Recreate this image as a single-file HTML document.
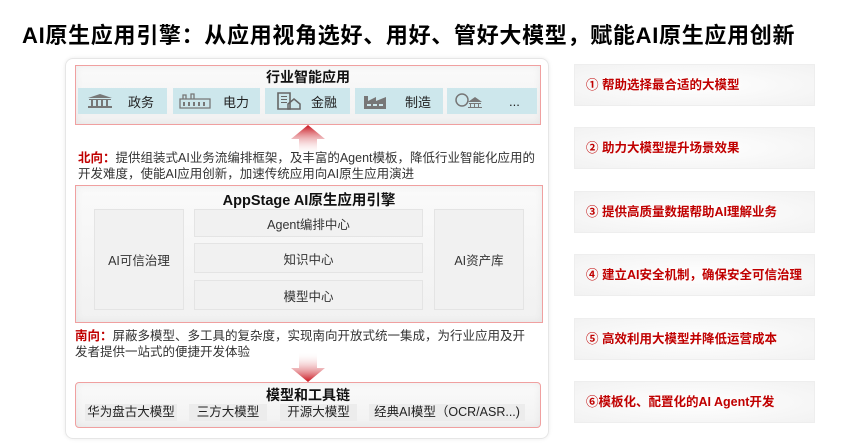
<!DOCTYPE html>
<html><head><meta charset="utf-8"><style>
*{margin:0;padding:0;box-sizing:border-box}
body{width:865px;height:444px;background:#fff;position:relative;overflow:hidden;font-family:"Liberation Sans","Noto Sans CJK SC",sans-serif;color:#222}
.a{position:absolute}
.title{left:22px;top:18px;font-size:22px;font-weight:bold;color:#000;white-space:nowrap;letter-spacing:0.7px}
.card{left:65px;top:58px;width:484px;height:381px;border:1px solid #e6e6e6;border-radius:8px;box-shadow:0 0 4px rgba(0,0,0,.08)}
.sec{border:1px solid #f0a0a0;background:linear-gradient(#fafafa,#f1f1f1);box-shadow:inset 0 0 8px rgba(0,0,0,.06)}
.h{font-weight:bold;font-size:14px;text-align:center;color:#111}
.tile{top:88px;height:26px;background:#cde7ec;font-size:13px;display:flex;align-items:center}
.tile span{position:absolute;left:50px}
.box{background:#f1f1f1;border:1px solid #e4e4e4;font-size:12.5px;display:flex;align-items:center;justify-content:center;color:#333}
.txt{font-size:12.5px;line-height:16px;color:#333}
.txt b{color:#c00000}
.chip{top:404px;height:17px;background:#ececec;font-size:12.5px;line-height:17px;text-align:center;color:#222}
.rb{left:574px;width:241px;height:42px;background:radial-gradient(ellipse at center,#fff 0%,#f2f2f2 100%);border:1px solid #eee;color:#c00000;font-weight:bold;font-size:12.5px;line-height:40px;padding-left:11px}
</style></head><body>
<div class="a title">AI原生应用引擎：从应用视角选好、用好、管好大模型，赋能AI原生应用创新</div>
<div class="a card"></div>

<div class="a sec" style="left:75px;top:65px;width:466px;height:60px"></div>
<div class="a h" style="left:75px;top:67px;width:466px">行业智能应用</div>
<div class="a tile" style="left:78px;width:89px"><svg class="a" style="left:8px;top:6px" width="28" height="14"><path d="M2 4L14 0L26 4Z M3 5h22v1H3z M5 6h2v6H5z M10 6h2v6h-2z M15 6h2v6h-2z M20 6h2v6h-2z M2 12h24v2H2z" fill="#777"/></svg><span>政务</span></div>
<div class="a tile" style="left:173px;width:87px"><svg class="a" style="left:6px;top:5px" width="32" height="16"><path d="M1 6h30v9H1z M4 2h3v4H4z M12 1h3v5h-3z" fill="none" stroke="#777" stroke-width="1.3"/><path d="M4 9h2v4H4zM9 9h2v4H9zM14 9h2v4h-2zM19 9h2v4h-2zM24 9h2v4h-2z" fill="#777"/></svg><span>电力</span></div>
<div class="a tile" style="left:265px;width:85px"><svg class="a" style="left:11px;top:4px" width="26" height="18"><path d="M2 1h12v16H2z" fill="none" stroke="#666" stroke-width="1.6"/><path d="M5 4h6v1H5zM5 7h6v1H5zM5 10h6v1H5z" fill="#666"/><path d="M12 12l6-5 6 5v5H12z" fill="none" stroke="#666" stroke-width="1.5"/></svg><span style="left:46px">金融</span></div>
<div class="a tile" style="left:355px;width:88px"><svg class="a" style="left:7px;top:4px" width="28" height="18"><path d="M2 17V4h4v5l8-4v4l10-4v12z" fill="#777"/><path d="M5 12h4v2H5zM11 12h4v2h-4zM17 12h4v2h-4z" fill="#cde7ec"/></svg><span>制造</span></div>
<div class="a tile" style="left:447px;width:90px"><svg class="a" style="left:7px;top:5px" width="30" height="16"><circle cx="8" cy="7" r="6" fill="none" stroke="#777" stroke-width="1.5"/><path d="M14 9l7-5 7 5zM15 10h12v1H15zM16 11h1v3h-1zM20 11h1v3h-1zM24 11h1v3h-1zM14 14h14v1H14z" fill="#777"/></svg><span style="left:62px">...</span></div>

<svg class="a" style="left:291px;top:125px" width="34" height="30"><defs><linearGradient id="u" x1="0" y1="0" x2="0" y2="1"><stop offset="0" stop-color="#c8101a"/><stop offset="1" stop-color="#fff" stop-opacity="0"/></linearGradient></defs><path d="M17 0L34 14H26V30H8V14H0Z" fill="url(#u)"/></svg>

<div class="a txt" style="left:78px;top:150px;width:462px"><b>北向：</b>提供组装式AI业务流编排框架，及丰富的Agent模板，降低行业智能化应用的开发难度，使能AI应用创新，加速传统应用向AI原生应用演进</div>

<div class="a sec" style="left:75px;top:185px;width:468px;height:138px"></div>
<div class="a h" style="left:75px;top:189px;width:468px;font-size:14.5px">AppStage AI原生应用引擎</div>
<div class="a box" style="left:94px;top:209px;width:90px;height:101px">AI可信治理</div>
<div class="a box" style="left:194px;top:209px;width:229px;height:28px">Agent编排中心</div>
<div class="a box" style="left:194px;top:243px;width:229px;height:30px">知识中心</div>
<div class="a box" style="left:194px;top:280px;width:229px;height:30px">模型中心</div>
<div class="a box" style="left:434px;top:209px;width:90px;height:101px">AI资产库</div>

<div class="a txt" style="left:75px;top:328px;width:452px"><b>南向：</b>屏蔽多模型、多工具的复杂度，实现南向开放式统一集成，为行业应用及开发者提供一站式的便捷开发体验</div>

<svg class="a" style="left:285px;top:352px" width="46" height="30"><defs><linearGradient id="d" x1="0" y1="0" x2="0" y2="1"><stop offset="0" stop-color="#fff" stop-opacity="0"/><stop offset="1" stop-color="#c8101a"/></linearGradient></defs><path d="M14 0H32V16H40L23 30L6 16H14Z" fill="url(#d)"/></svg>

<div class="a sec" style="left:75px;top:382px;width:466px;height:46px;border-radius:4px"></div>
<div class="a h" style="left:75px;top:385px;width:466px">模型和工具链</div>
<div class="a chip" style="left:85px;width:92px">华为盘古大模型</div>
<div class="a chip" style="left:189px;width:78px">三方大模型</div>
<div class="a chip" style="left:280px;width:77px">开源大模型</div>
<div class="a chip" style="left:369px;width:156px">经典AI模型（OCR/ASR...)</div>

<div class="a rb" style="top:64px">① 帮助选择最合适的大模型</div>
<div class="a rb" style="top:127px">② 助力大模型提升场景效果</div>
<div class="a rb" style="top:191px">③ 提供高质量数据帮助AI理解业务</div>
<div class="a rb" style="top:254px">④ 建立AI安全机制，确保安全可信治理</div>
<div class="a rb" style="top:318px">⑤ 高效利用大模型并降低运营成本</div>
<div class="a rb" style="top:381px">⑥模板化、配置化的AI Agent开发</div>
</body></html>
